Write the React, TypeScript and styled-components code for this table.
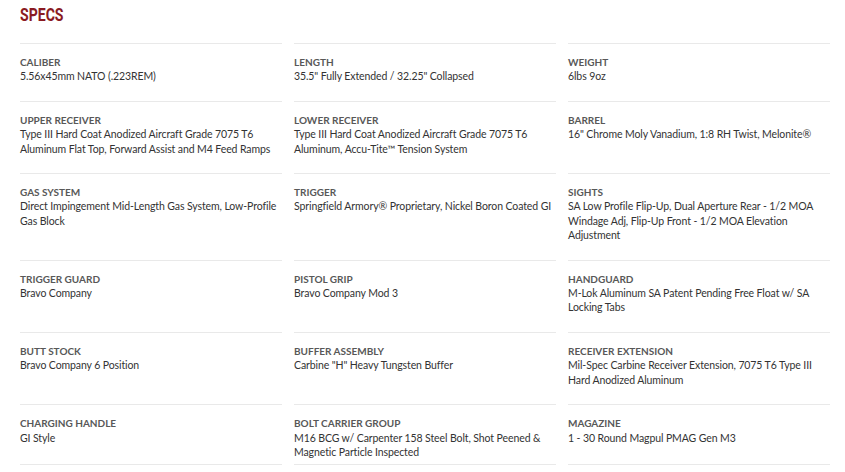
import styled, { createGlobalStyle } from "styled-components";

const GlobalStyle = createGlobalStyle`
  body {
    margin: 0;
    background: #ffffff;
    font-family: Lato, "Liberation Sans", Arial, sans-serif;
  }
`;

const SPECS = [
  { label: "Caliber", value: "5.56x45mm NATO (.223REM)" },
  { label: "Length", value: "35.5\" Fully Extended / 32.25\" Collapsed" },
  { label: "Weight", value: "6lbs 9oz" },
  {
    label: "Upper Receiver",
    value: "Type III Hard Coat Anodized Aircraft Grade 7075 T6 Aluminum Flat Top, Forward Assist and M4 Feed Ramps",
  },
  {
    label: "Lower Receiver",
    value: "Type III Hard Coat Anodized Aircraft Grade 7075 T6 Aluminum, Accu-Tite\u2122 Tension System",
  },
  { label: "Barrel", value: "16\" Chrome Moly Vanadium, 1:8 RH Twist, Melonite\u00ae" },
  {
    label: "Gas System",
    value: "Direct Impingement Mid-Length Gas System, Low-Profile Gas Block",
  },
  { label: "Trigger", value: "Springfield Armory\u00ae Proprietary, Nickel Boron Coated GI" },
  {
    label: "Sights",
    value: "SA Low Profile Flip-Up, Dual Aperture Rear - 1/2 MOA Windage Adj, Flip-Up Front - 1/2 MOA Elevation Adjustment",
  },
  { label: "Trigger Guard", value: "Bravo Company" },
  { label: "Pistol Grip", value: "Bravo Company Mod 3" },
  { label: "Handguard", value: "M-Lok Aluminum SA Patent Pending Free Float w/ SA Locking Tabs" },
  { label: "Butt Stock", value: "Bravo Company 6 Position" },
  { label: "Buffer Assembly", value: "Carbine \"H\" Heavy Tungsten Buffer" },
  {
    label: "Receiver Extension",
    value: "Mil-Spec Carbine Receiver Extension, 7075 T6 Type III Hard Anodized Aluminum",
  },
  { label: "Charging Handle", value: "GI Style" },
  {
    label: "Bolt Carrier Group",
    value: "M16 BCG w/ Carpenter 158 Steel Bolt, Shot Peened & Magnetic Particle Inspected",
  },
  { label: "Magazine", value: "1 - 30 Round Magpul PMAG Gen M3" },
];

const Section = styled.section`
  padding: 4px 14px 0 20px;
`;

const Title = styled.h2`
  display: inline-block;
  margin: 0;
  font-family: Roboto, "Liberation Sans", sans-serif;
  font-weight: 700;
  font-size: 19px;
  line-height: 22px;
  color: #8a1a22;
  transform: scaleX(0.74);
  transform-origin: left center;
`;

const Grid = styled.div`
  display: grid;
  grid-template-columns: repeat(3, 262px);
  column-gap: 12px;
  margin-top: 17px;
`;

const Cell = styled.div<{ $last: boolean }>`
  border-top: 1px solid #e9e9e9;
  border-bottom: ${(p) => (p.$last ? "1px solid #e9e9e9" : "none")};
  padding: 11px 0 ${(p) => (p.$last ? "5px" : "17px")};
`;

const Label = styled.div`
  font-size: 10px;
  line-height: 14.4px;
  font-weight: 700;
  text-transform: uppercase;
  color: #585858;
`;

const Value = styled.div`
  font-size: 10.5px;
  line-height: 14.4px;
  letter-spacing: -0.1px;
  color: #333333;
`;

export default function App() {
  return (
    <>
      <GlobalStyle />
      <Section>
        <Title>SPECS</Title>
        <Grid>
          {SPECS.map((spec, i) => (
            <Cell key={spec.label} $last={i >= SPECS.length - 3}>
              <Label>{spec.label}</Label>
              <Value>{spec.value}</Value>
            </Cell>
          ))}
        </Grid>
      </Section>
    </>
  );
}
